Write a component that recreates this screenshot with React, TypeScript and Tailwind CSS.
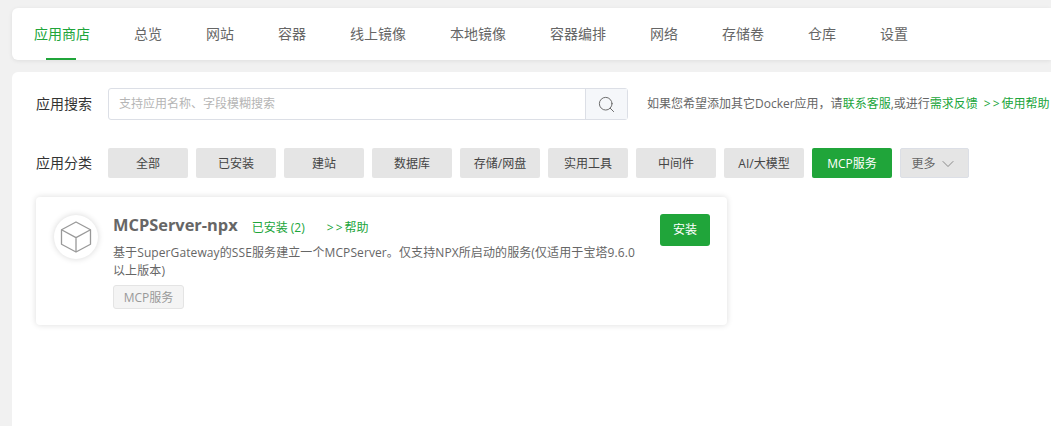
import React from 'react';
import { Search, ChevronDown } from 'lucide-react';

const tabs = ['应用商店', '总览', '网站', '容器', '线上镜像', '本地镜像', '容器编排', '网络', '存储卷', '仓库', '设置'];
const cats = ['全部', '已安装', '建站', '数据库', '存储/网盘', '实用工具', '中间件', 'AI/大模型', 'MCP服务'];

export default function App() {
  return (
    <div
      className="h-[426px] w-[1051px] overflow-hidden bg-[#f1f1f1] pl-3 pt-2 text-[#666]"
      style={{ fontFamily: '"Open Sans", "Noto Sans CJK SC", sans-serif' }}
    >
      <div className="flex h-[52px] gap-11 rounded-l-md bg-white pl-[22px] shadow-[0_1px_4px_rgba(0,0,0,0.08)]">
        {tabs.map((t, i) => (
          <div key={t} className={`relative flex items-center pb-[1px] text-[14px] ${i === 0 ? 'text-[#20a53a]' : 'text-[#666]'}`}>
            {t}
            {i === 0 && <span className="absolute bottom-0 left-[12px] h-0.5 w-[30px] bg-[#20a53a]" />}
          </div>
        ))}
      </div>

      <div className="mt-3 h-[354px] rounded-tl-md bg-white pl-6 pt-4">
        <div className="flex h-8 items-center">
          <span className="w-[72px] text-[14px] leading-none text-[#333]">应用搜索</span>
          <div className="flex h-8 w-[520px] rounded-[3px] border border-[#dcdfe6]">
            <span className="flex-1 pl-[10px] text-[12px] leading-[30px] text-[#b5b5b5]">支持应用名称、字段模糊搜索</span>
            <span className="flex w-[42px] items-center justify-center border-l border-[#dcdfe6] bg-[#f5f7fa]">
              <Search size={19} strokeWidth={1.2} className="text-[#666]" />
            </span>
          </div>
          <span className="ml-[19px] whitespace-nowrap text-[12px] text-[#666]">
            如果您希望添加其它Docker应用，请<span className="text-[#20a53a]">联系客服</span>,或进行<span className="text-[#20a53a]">需求反馈</span>
            <span className="ml-[6px] text-[#20a53a]"><span className="tracking-[2px]">&gt;&gt;</span>使用帮助</span>
          </span>
        </div>

        <div className="mt-7 flex h-[30px] items-center">
          <span className="w-[72px] text-[14px] leading-none text-[#333]">应用分类</span>
          <div className="flex gap-2">
            {cats.map((c) => (
              <div
                key={c}
                className={`flex h-[30px] w-20 items-center justify-center rounded-[2px] pt-[2px] text-[12px] ${
                  c === 'MCP服务' ? 'bg-[#20a53a] text-white' : 'bg-[#e5e5e5] text-[#444]'
                }`}
              >
                {c}
              </div>
            ))}
            <div className="flex h-[30px] w-[69px] items-center justify-center gap-[2px] rounded-[2px] border border-[#dcdfe6] bg-[#e5e5e5] pt-px text-[12px] text-[#666]">
              更多
              <ChevronDown size={20} strokeWidth={1} className="text-[#777]" />
            </div>
          </div>
        </div>

        <div className="mt-[19px] flex h-[128px] w-[691px] rounded-[4px] bg-white pl-[18px] pr-[17px] pt-[18px] shadow-[0_0_6px_rgba(0,0,0,0.14)]">
          <div className="flex h-11 w-11 shrink-0 items-center justify-center rounded-full bg-white shadow-[0_0_6px_rgba(0,0,0,0.16)]">
            <svg width="32" height="32" viewBox="0 0 32 32" fill="none" stroke="#999" strokeWidth="1.3" strokeLinejoin="round">
              <path d="M16 1 L30.5 8.8 V23.2 L16 31 L1.5 23.2 V8.8 Z" />
              <path d="M1.5 8.8 L16 16.6 L30.5 8.8 M16 16.6 V31" />
            </svg>
          </div>
          <div className="ml-[15px] w-[524px]">
            <div className="flex h-5 items-center whitespace-nowrap">
              <span className="text-[16.4px] font-bold text-[#666]">MCPServer-npx</span>
              <span className="ml-[14px] pt-[5px] text-[12px] text-[#20a53a]">已安装 (2)</span>
              <span className="ml-[22px] pt-[5px] text-[12px] text-[#20a53a]"><span className="tracking-[2px]">&gt;&gt;</span>帮助</span>
            </div>
            <p className="mt-[9px] text-[12px] leading-[18px] tracking-[0.1px] text-[#666]">
              基于SuperGateway的SSE服务建立一个MCPServer。仅支持NPX所启动的服务(仅适用于宝塔9.6.0以上版本)
            </p>
            <span className="mt-[5px] inline-flex h-6 w-[71px] items-center justify-center rounded-[3px] border border-[#e4e4e4] bg-[#f4f4f4] pt-[2px] text-[12px] text-[#999]">
              MCP服务
            </span>
          </div>
          <button className="-mt-px ml-auto h-8 w-[50px] rounded-[3px] bg-[#20a53a] text-[12px] text-white">安装</button>
        </div>
      </div>
    </div>
  );
}
